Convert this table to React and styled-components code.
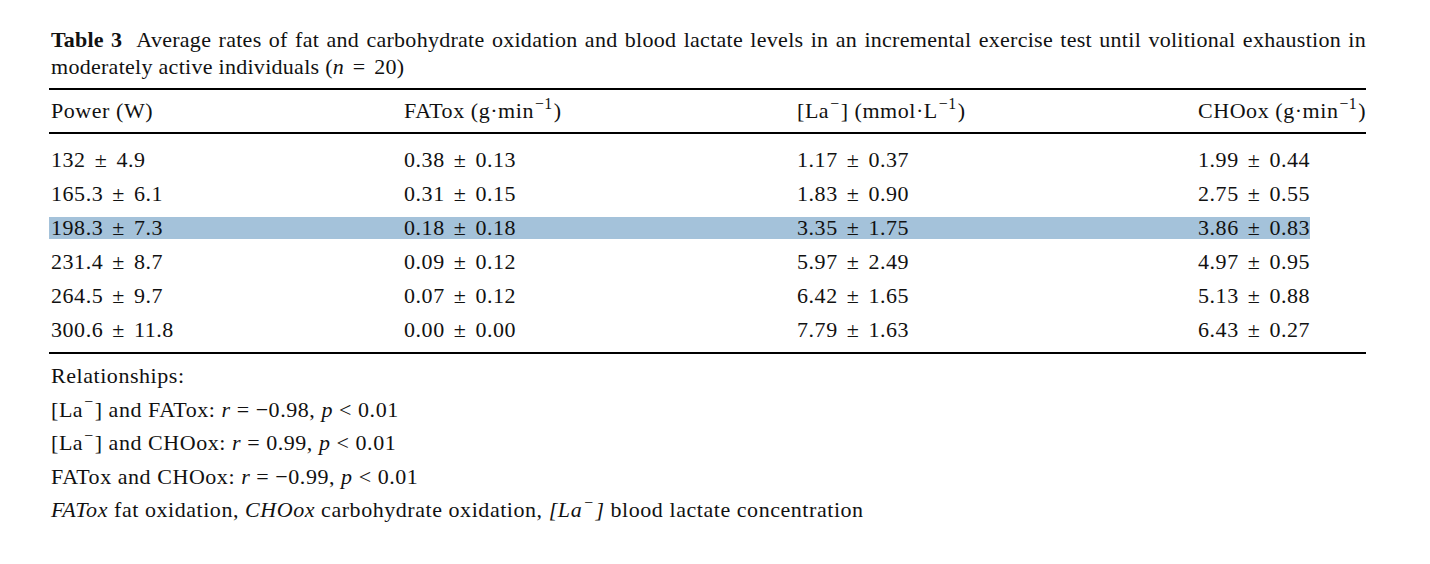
import React from "react";
import styled, { createGlobalStyle } from "styled-components";

const GlobalStyle = createGlobalStyle`
  body {
    margin: 0;
    background: #ffffff;
  }
`;

const Page = styled.div`
  width: 1317px;
  padding: 26px 0 0 49px;
  font-family: "Liberation Serif", "Times New Roman", serif;
  font-size: 22px;
  letter-spacing: 0.55px;
  color: #111;
`;

const Caption = styled.p`
  margin: 0;
  line-height: 27px;
  text-align: justify;
  padding-left: 2px;
  letter-spacing: 0.28px;
`;

const Label = styled.b`
  margin-right: 8px;
  letter-spacing: 0.2px;
`;

const Table = styled.div`
  margin-top: 8px;
  border-top: 2.5px solid #000;
  border-bottom: 2px solid #000;
`;

const Head = styled.div`
  display: grid;
  grid-template-columns: 353px 393px 401px auto;
  padding: 10px 0 10px 2px;
  line-height: 22px;
  border-bottom: 2.5px solid #000;
`;

const Body = styled.div`
  display: flex;
  flex-direction: column;
  gap: 12px;
  padding: 15px 0 11px;
`;

const Row = styled.div`
  display: grid;
  grid-template-columns: 353px 393px 401px auto;
  width: fit-content;
  padding-left: 2px;
  line-height: 22px;
  background: ${(p) => (p.$selected ? "#a4c2da" : "transparent")};
`;

const Cell = styled.div`
  white-space: nowrap;
`;

const Sup = styled.sup`
  font-size: 0.72em;
  line-height: 0;
  vertical-align: 0.6em;
  letter-spacing: 0.5px;
  padding: 0 1px;
`;

const Pm = styled.span`
  margin: 0 3px;
`;

const I = styled.i`
  font-style: italic;
`;

const Notes = styled.div`
  margin-top: 5px;
  line-height: 33.5px;
  padding-left: 2px;
`;

const rows = [
  ["132", "4.9", "0.38", "0.13", "1.17", "0.37", "1.99", "0.44"],
  ["165.3", "6.1", "0.31", "0.15", "1.83", "0.90", "2.75", "0.55"],
  ["198.3", "7.3", "0.18", "0.18", "3.35", "1.75", "3.86", "0.83"],
  ["231.4", "8.7", "0.09", "0.12", "5.97", "2.49", "4.97", "0.95"],
  ["264.5", "9.7", "0.07", "0.12", "6.42", "1.65", "5.13", "0.88"],
  ["300.6", "11.8", "0.00", "0.00", "7.79", "1.63", "6.43", "0.27"],
];

const Val = ({ m, sd }) => (
  <Cell>
    {m} <Pm>±</Pm> {sd}
  </Cell>
);

const La = () => (
  <>
    [La<Sup>−</Sup>]
  </>
);

export default function App() {
  return (
    <Page>
      <GlobalStyle />
      <Caption>
        <Label>Table 3</Label> Average rates of fat and carbohydrate oxidation
        and blood lactate levels in an incremental exercise test until
        volitional exhaustion in moderately active individuals (<I>n</I>{" "}
        <Pm>=</Pm> 20)
      </Caption>
      <Table>
        <Head>
          <Cell>Power (W)</Cell>
          <Cell>
            FATox (g·min<Sup>−1</Sup>)
          </Cell>
          <Cell>
            <La /> (mmol·L<Sup>−1</Sup>)
          </Cell>
          <Cell>
            CHOox (g·min<Sup>−1</Sup>)
          </Cell>
        </Head>
        <Body>
          {rows.map((r, i) => (
            <Row key={i} $selected={i === 2}>
              <Val m={r[0]} sd={r[1]} />
              <Val m={r[2]} sd={r[3]} />
              <Val m={r[4]} sd={r[5]} />
              <Val m={r[6]} sd={r[7]} />
            </Row>
          ))}
        </Body>
      </Table>
      <Notes>
        <div>Relationships:</div>
        <div>
          <La /> and FATox: <I>r</I> = −0.98, <I>p</I> &lt; 0.01
        </div>
        <div>
          <La /> and CHOox: <I>r</I> = 0.99, <I>p</I> &lt; 0.01
        </div>
        <div>
          FATox and CHOox: <I>r</I> = −0.99, <I>p</I> &lt; 0.01
        </div>
        <div>
          <I>FATox</I> fat oxidation, <I>CHOox</I> carbohydrate oxidation,{" "}
          <I>
            [La<Sup>−</Sup>]
          </I>{" "}
          blood lactate concentration
        </div>
      </Notes>
    </Page>
  );
}
